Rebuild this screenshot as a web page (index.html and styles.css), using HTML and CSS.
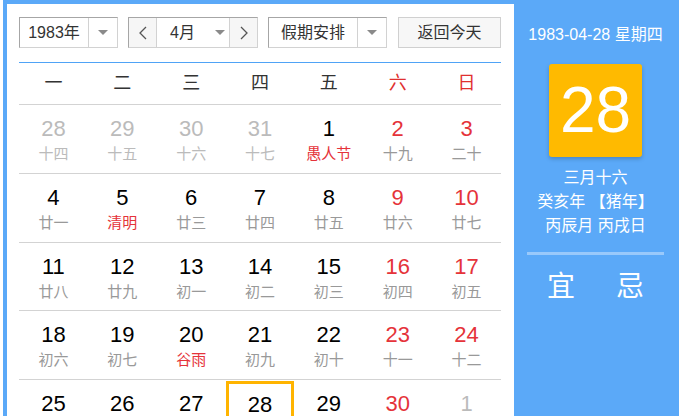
FILE: index.html
```html
<!DOCTYPE html>
<html lang="zh-CN">
<head>
<meta charset="utf-8">
<title>万年历</title>
<link rel="stylesheet" href="styles.css">
</head>
<body>
<div class="cal">
  <div class="main">
    <div class="toolbar">
      <div class="select year">
        <span class="label">1983年</span>
        <span class="drop"><i class="tri"></i></span>
      </div>
      <div class="select month">
        <span class="nav"><svg width="8" height="14" viewBox="0 0 8 14"><path d="M7 1L1 7l6 6" fill="none" stroke="#555" stroke-width="1.3"/></svg></span>
        <span class="label">4月</span>
        <span class="mdrop"><i class="tri"></i></span>
        <span class="nav next"><svg width="8" height="14" viewBox="0 0 8 14"><path d="M1 1l6 6-6 6" fill="none" stroke="#555" stroke-width="1.3"/></svg></span>
      </div>
      <div class="select holiday">
        <span class="label">假期安排</span>
        <span class="drop"><i class="tri"></i></span>
      </div>
      <div class="btn">返回今天</div>
    </div>

    <div class="grid">
      <div class="week head">
        <span>一</span><span>二</span><span>三</span><span>四</span><span>五</span><span class="we">六</span><span class="we">日</span>
      </div>
      <div class="week">
        <div class="day other"><b>28</b><s>十四</s></div>
        <div class="day other"><b>29</b><s>十五</s></div>
        <div class="day other"><b>30</b><s>十六</s></div>
        <div class="day other"><b>31</b><s>十七</s></div>
        <div class="day"><b>1</b><s class="fest">愚人节</s></div>
        <div class="day we"><b>2</b><s>十九</s></div>
        <div class="day we"><b>3</b><s>二十</s></div>
      </div>
      <div class="week">
        <div class="day"><b>4</b><s>廿一</s></div>
        <div class="day"><b>5</b><s class="fest">清明</s></div>
        <div class="day"><b>6</b><s>廿三</s></div>
        <div class="day"><b>7</b><s>廿四</s></div>
        <div class="day"><b>8</b><s>廿五</s></div>
        <div class="day we"><b>9</b><s>廿六</s></div>
        <div class="day we"><b>10</b><s>廿七</s></div>
      </div>
      <div class="week">
        <div class="day"><b>11</b><s>廿八</s></div>
        <div class="day"><b>12</b><s>廿九</s></div>
        <div class="day"><b>13</b><s>初一</s></div>
        <div class="day"><b>14</b><s>初二</s></div>
        <div class="day"><b>15</b><s>初三</s></div>
        <div class="day we"><b>16</b><s>初四</s></div>
        <div class="day we"><b>17</b><s>初五</s></div>
      </div>
      <div class="week">
        <div class="day"><b>18</b><s>初六</s></div>
        <div class="day"><b>19</b><s>初七</s></div>
        <div class="day"><b>20</b><s class="fest">谷雨</s></div>
        <div class="day"><b>21</b><s>初九</s></div>
        <div class="day"><b>22</b><s>初十</s></div>
        <div class="day we"><b>23</b><s>十一</s></div>
        <div class="day we"><b>24</b><s>十二</s></div>
      </div>
      <div class="week">
        <div class="day"><b>25</b><s>十三</s></div>
        <div class="day"><b>26</b><s>十四</s></div>
        <div class="day"><b>27</b><s>十五</s></div>
        <div class="day today"><b>28</b><s>十六</s></div>
        <div class="day"><b>29</b><s>十七</s></div>
        <div class="day we"><b>30</b><s>十八</s></div>
        <div class="day other"><b>1</b><s>十九</s></div>
      </div>
    </div>
  </div>

  <div class="side">
    <div class="date">1983-04-28 星期四</div>
    <div class="big">28</div>
    <div class="lunar">
      <div>三月十六</div>
      <div>癸亥年 【猪年】</div>
      <div>丙辰月 丙戌日</div>
    </div>
    <div class="sep"></div>
    <div class="yiji"><span>宜</span><span>忌</span></div>
  </div>
</div>
</body>
</html>
```

FILE: styles.css
```css
html, body {
  margin: 0;
  padding: 0;
  overflow: hidden;
  background: #fff;
}
body {
  font-family: "Liberation Sans", "Noto Sans CJK SC", sans-serif;
  color: #333;
}
.cal {
  display: flex;
  margin-left: 3px;
  border: 4px solid #5ba9f8;
  border-bottom: none;
  width: 670px;
}
.main {
  width: 482px;
  padding: 13px 13px 0 12px;
  background: #fff;
}
.toolbar {
  display: flex;
  height: 31px;
  margin-bottom: 14px;
  font-size: 16px;
}
.select {
  display: flex;
  box-sizing: border-box;
  height: 31px;
  border: 1px solid;
  border-color: #a6a6a6 #d2d2d2 #d2d2d2 #a6a6a6;
  background: #fff;
}
.select .label {
  display: flex;
  align-items: center;
  justify-content: center;
  line-height: 29px;
}
.year { width: 99px; }
.year .label { width: 68px; }
.drop {
  flex: 1;
  display: flex;
  align-items: center;
  justify-content: center;
  border-left: 1px solid #d2d2d2;
}
.tri {
  display: block;
  width: 0;
  height: 0;
  border-left: 5px solid transparent;
  border-right: 5px solid transparent;
  border-top: 5px solid #8a8a8a;
}
.month {
  width: 130px;
  margin-left: 10px;
}
.nav {
  width: 27px;
  display: flex;
  align-items: center;
  justify-content: center;
  background: #f6f6f6;
  border-right: 1px solid #d2d2d2;
}
.nav.next {
  border-right: none;
  border-left: 1px solid #d2d2d2;
}
.month .label {
  width: 40px;
  justify-content: flex-start;
  padding-left: 13px;
}
.mdrop {
  flex: 1;
  display: flex;
  align-items: center;
  justify-content: center;
}
.holiday {
  width: 119px;
  margin-left: 10px;
}
.holiday .label { width: 88px; }
.btn {
  box-sizing: border-box;
  width: 103px;
  height: 31px;
  margin-left: 11px;
  border: 1px solid #d0d0d0;
  background: #f7f7f7;
  text-align: center;
  line-height: 29px;
}
.grid {
  border-top: 1px solid #4fa3f6;
}
.week {
  display: grid;
  grid-template-columns: repeat(7, 1fr);
  border-bottom: 1px solid #d3d3d3;
  height: 67.75px;
}
.week.head {
  height: 41px;
  font-size: 18px;
  color: #333;
}
.week.head span {
  text-align: center;
  line-height: 41px;
}
.week.head .we { color: #e0302f; }
.day {
  display: flex;
  flex-direction: column;
  align-items: center;
  padding-top: 10px;
}
.day b {
  font-weight: normal;
  font-size: 22px;
  line-height: 28px;
  color: #000;
}
.day s {
  text-decoration: none;
  font-size: 15px;
  line-height: 22px;
  color: #999;
}
.day.we b { color: #e5333a; }
.day.other b { color: #bbb; }
.day.other s { color: #bbb; }
.day s.fest { color: #e5333a; }
.day.today {
  box-shadow: inset 0 0 0 3px #ffb400;
  margin-top: 1px;
}
.side {
  width: 163px;
  background: #5ba9f8;
  color: #fff;
  text-align: center;
  padding-top: 20px;
  height: 420px;
}
.date {
  font-size: 16px;
  line-height: 22px;
}
.big {
  width: 93px;
  height: 93px;
  margin: 18px auto 0;
  background: #ffba00;
  border-radius: 3px;
  box-shadow: 0 2px 4px rgba(0, 0, 0, 0.2);
  font-size: 64px;
  line-height: 93px;
}
.lunar {
  margin-top: 9px;
  font-size: 16px;
  line-height: 24px;
}
.sep {
  height: 3px;
  margin: 14px 13px 0;
  background: rgba(255, 255, 255, 0.38);
}
.yiji {
  display: flex;
  justify-content: center;
  gap: 41px;
  margin-top: 14px;
  font-size: 28px;
  line-height: 36px;
}
```
